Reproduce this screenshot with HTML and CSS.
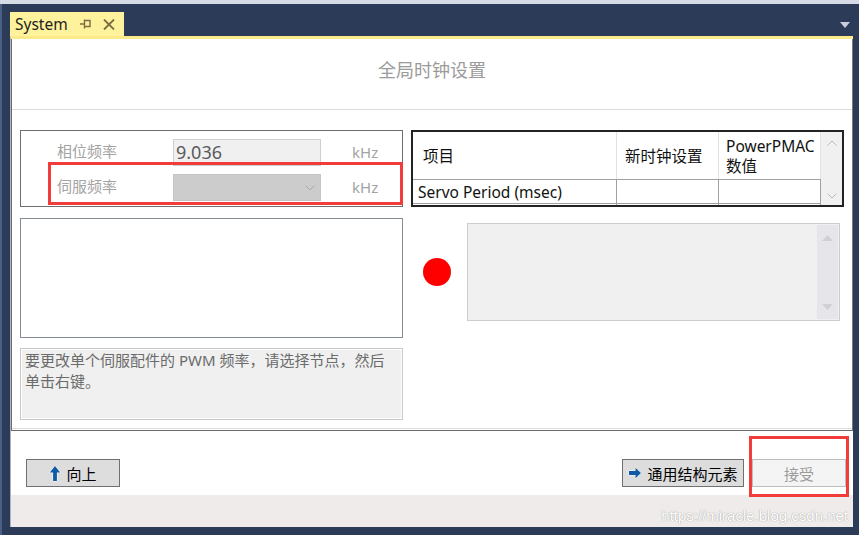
FILE: index.html
```html
<!DOCTYPE html>
<html lang="zh-CN">

<head>
    <meta charset="UTF-8">
    <title>System - 全局时钟设置</title>
    <link rel="stylesheet" href="styles.css">
</head>

<body>
    <div class="app">
        <div class="topline"></div>

        <!-- 标签栏 -->
        <div class="tabstrip">
            <div class="tab">
                <span class="tab-title">System</span>
                <svg class="tab-pin" width="11" height="10" viewBox="0 0 11 10">
                    <path d="M0 5h4.5M4.5 0.5v9M4.5 1.5h5.5v6h-5.5" stroke="#7a6e44" stroke-width="1.4" fill="none" />
                </svg>
                <svg class="tab-close" width="12" height="11" viewBox="0 0 12 11">
                    <path d="M1 0.5l10 10M11 0.5l-10 10" stroke="#776c45" stroke-width="1.8" fill="none" />
                </svg>
            </div>
            <svg class="tab-menu" width="10" height="6" viewBox="0 0 10 6">
                <path d="M0 0h10l-5 6z" fill="#c9cedf" />
            </svg>
        </div>

        <div class="doc">
            <div class="panel">
                <div class="panel-head">全局时钟设置</div>

                <div class="panel-body">
                    <!-- 左侧 -->
                    <div class="col-left">
                        <div class="freq-box">
                            <div class="freq-row">
                                <span class="freq-label">相位频率</span>
                                <div class="field">9.036</div>
                                <span class="unit">kHz</span>
                            </div>
                            <div class="freq-row">
                                <span class="freq-label">伺服频率</span>
                                <div class="field combo">
                                    <svg width="10" height="6" viewBox="0 0 10 6">
                                        <path d="M0.5 0.5l4.5 4.5 4.5-4.5" stroke="#aaa" fill="none" />
                                    </svg>
                                </div>
                                <span class="unit">kHz</span>
                            </div>
                        </div>

                        <div class="node-list"></div>

                        <div class="hint">要更改单个伺服配件的 PWM 频率，请选择节点，然后单击右键。</div>
                    </div>

                    <!-- 右侧 -->
                    <div class="col-right">
                        <div class="grid">
                            <div class="grid-cols">
                                <div class="grid-row head">
                                    <div class="cell c1">项目</div>
                                    <div class="cell c2">新时钟设置</div>
                                    <div class="cell c3">PowerPMAC<br>数值</div>
                                </div>
                                <div class="grid-row">
                                    <div class="cell c1">Servo Period (msec)</div>
                                    <div class="cell c2"></div>
                                    <div class="cell c3"></div>
                                </div>
                                <div class="grid-row">
                                    <div class="cell c1"></div>
                                    <div class="cell c2"></div>
                                    <div class="cell c3"></div>
                                </div>
                            </div>
                            <div class="vscroll">
                                <svg width="10" height="6" viewBox="0 0 10 6">
                                    <path d="M0.5 5.5l4.5-4.5 4.5 4.5" stroke="#bbb" fill="none" />
                                </svg>
                                <svg width="10" height="6" viewBox="0 0 10 6">
                                    <path d="M0.5 0.5l4.5 4.5 4.5-4.5" stroke="#bbb" fill="none" />
                                </svg>
                            </div>
                        </div>

                        <div class="status-row">
                            <div class="led"></div>
                            <div class="log">
                                <div class="log-scroll">
                                    <svg width="11" height="6" viewBox="0 0 11 6">
                                        <path d="M0 6l5.5-6 5.5 6z" fill="#cfcfd4" />
                                    </svg>
                                    <svg width="11" height="6" viewBox="0 0 11 6">
                                        <path d="M0 0l5.5 6 5.5-6z" fill="#cfcfd4" />
                                    </svg>
                                </div>
                            </div>
                        </div>
                    </div>
                </div>
            </div>

            <!-- 底部按钮 -->
            <div class="footer">
                <button class="btn">
                    <svg width="12" height="17" viewBox="0 0 12 17">
                        <path d="M6 1L11.2 7.5H7.9V16H4.1V7.5H0.8Z" fill="#0f5aa6" stroke="#fff" stroke-width="1" paint-order="stroke" />
                    </svg>
                    向上
                </button>
                <div class="footer-right">
                    <button class="btn wide">
                        <svg width="14" height="12" viewBox="0 0 14 12">
                            <path d="M1 4H7.5V0.8L13 6L7.5 11.2V8H1Z" fill="#0f5aa6" stroke="#fff" stroke-width="1" paint-order="stroke" />
                        </svg>
                        通用结构元素
                    </button>
                    <button class="btn disabled">接受</button>
                </div>
            </div>

            <div class="strip">
                <span class="watermark">https://miracle.blog.csdn.net</span>
            </div>
        </div>

        <!-- 红色标注框 -->
        <div class="mark mark-freq"></div>
        <div class="mark mark-accept"></div>
    </div>
</body>

</html>
```

FILE: styles.css
```css
body {
    margin: 0;
    font-family: "Noto Sans", "Noto Sans CJK SC", sans-serif;
}

.app {
    position: relative;
    width: 859px;
    height: 535px;
    overflow: hidden;
    background: #2c3b58;
    box-shadow: inset 2px 0 0 #4a5f88;
}

.topline {
    height: 4px;
    background: #d7dbe8;
}

/* 标签栏 */
.tabstrip {
    height: 32px;
    display: flex;
    align-items: flex-end;
    padding-left: 10px;
}

.tab {
    width: 114px;
    height: 24px;
    box-sizing: border-box;
    background: #fff29d;
    display: flex;
    align-items: center;
    padding-left: 5px;
}

.tab-title {
    font-size: 15.5px;
    color: #1e1e1e;
    line-height: 20px;
}

.tab-pin {
    margin-left: 12px;
}

.tab-close {
    margin-left: 12px;
}

.tab-menu {
    margin-left: auto;
    margin-right: 9px;
    margin-bottom: 8px;
}

/* 文档区域 */
.doc {
    margin-left: 10px;
    width: 843px;
    height: 491px;
    box-sizing: border-box;
    border-top: 3px solid #fbe98a;
    border-left: 1px solid #a9b4cc;
    background: #fff;
    display: flex;
    flex-direction: column;
}

.panel {
    border-left: 1px solid #6b6b6b;
    border-right: 1px solid #7a7a7a;
    border-bottom: 1px solid #6b6b6b;
    padding-bottom: 1px;
}

.panel-head {
    height: 71px;
    box-sizing: border-box;
    padding-top: 18px;
    border-bottom: 1px solid #dcdcdc;
    text-align: center;
    font-size: 18px;
    line-height: 24px;
    color: #9b9b9b;
    font-family: "Noto Sans CJK SC", sans-serif;
}

.panel-body {
    display: flex;
    gap: 8px;
    padding: 20px 6px 8px 8px;
    border-bottom: 1px solid #dcdcdc;
}

.col-left {
    width: 383px;
    display: flex;
    flex-direction: column;
}

.col-right {
    width: 433px;
}

/* 频率设置 */
.freq-box {
    height: 77px;
    box-sizing: border-box;
    border: 1px solid #6e6e6e;
    padding: 8px 0 0 36px;
    display: flex;
    flex-direction: column;
    gap: 8px;
}

.freq-row {
    display: flex;
    align-items: center;
    height: 27px;
}

.freq-label {
    width: 116px;
    font-size: 15px;
    line-height: 20px;
    margin-top: -3px;
    color: #a3a3a3;
    font-family: "Noto Sans CJK SC", sans-serif;
}

.field {
    width: 148px;
    height: 27px;
    box-sizing: border-box;
    background: #f0f0f0;
    border: 1px solid #cfcfcf;
    padding-left: 2px;
    font-size: 18px;
    line-height: 25px;
    color: #5a5a5a;
}

.field.combo {
    background: #cccccc;
    border-color: #c4c4c4;
    display: flex;
    align-items: center;
    justify-content: flex-end;
    padding-right: 5px;
}

.unit {
    margin-left: 31px;
    margin-top: -2px;
    font-size: 15px;
    color: #a3a3a3;
}

.node-list {
    margin-top: 11px;
    height: 120px;
    box-sizing: border-box;
    border: 1px solid #858c93;
}

.hint {
    margin-top: 10px;
    height: 72px;
    box-sizing: border-box;
    border: 1px solid #c9c9c9;
    box-shadow: inset 0 0 0 1px #fff;
    background: #f0f0f0;
    padding: 1px 14px 0 4px;
    font-size: 15px;
    line-height: 21px;
    color: #6b6b6b;
}

/* 表格 */
.grid {
    height: 77px;
    box-sizing: border-box;
    border: 2px solid #222;
    display: flex;
}

.grid-cols {
    width: 408px;
    overflow: hidden;
}

.grid-row {
    display: flex;
    height: 23px;
    border-bottom: 1px solid #a0a0a0;
}

.grid-row.head {
    height: 47px;
}

.cell {
    box-sizing: border-box;
    border-right: 1px solid #a0a0a0;
    display: flex;
    align-items: center;
    font-size: 15.5px;
    line-height: 20px;
    color: #111;
    white-space: nowrap;
}

.head .cell {
    border-right-color: #e2e2e2;
}

.c1 {
    width: 204px;
    padding-left: 5px;
}

.head .c1 {
    padding-left: 10px;
}

.c2 {
    width: 102px;
    padding-left: 8px;
}

.c3 {
    width: 102px;
    padding-left: 7px;
}

.vscroll {
    flex: 1;
    background: #f0f0f0;
    display: flex;
    flex-direction: column;
    align-items: center;
    justify-content: space-between;
    padding: 8px 0 6px;
}

/* 状态 */
.status-row {
    display: flex;
    align-items: center;
    margin-top: 16px;
    padding-left: 12px;
}

.led {
    width: 28px;
    height: 28px;
    border-radius: 50%;
    background: #ff0000;
}

.log {
    margin-left: 16px;
    width: 373px;
    height: 98px;
    box-sizing: border-box;
    border: 1px solid #cccccc;
    background: #f0f0f0;
    padding: 1px;
    display: flex;
    justify-content: flex-end;
}

.log-scroll {
    width: 21px;
    background: #e5e5ea;
    display: flex;
    flex-direction: column;
    align-items: center;
    justify-content: space-between;
    padding: 10px 0 9px;
}

/* 底部按钮 */
.footer {
    height: 64px;
    box-sizing: border-box;
    padding: 28px 7px 0 15px;
    display: flex;
    justify-content: space-between;
    align-items: flex-start;
}

.footer-right {
    display: flex;
    gap: 8px;
}

.btn {
    width: 94px;
    height: 28px;
    box-sizing: border-box;
    border: 1px solid #707070;
    background: #dddddd;
    display: flex;
    align-items: center;
    justify-content: center;
    gap: 5px;
    padding: 0;
    font-family: "Noto Sans CJK SC", sans-serif;
    font-size: 15px;
    color: #000;
}

.btn.wide {
    width: 122px;
}

.btn.disabled {
    background: #f4f4f4;
    border-color: #bdbdbd;
    color: #9a9a9a;
}

.strip {
    flex: 1;
    background: #efebea;
    display: flex;
    justify-content: flex-end;
    align-items: flex-end;
    padding: 0 5px 3px 0;
}

.watermark {
    font-family: "Liberation Sans", sans-serif;
    font-size: 15px;
    color: #fff;
    text-shadow: 0 0 1px #999, 0 0 1px #bbb;
}

/* 红色标注 */
.mark {
    position: absolute;
    box-sizing: border-box;
    border: 3px solid #f23b3b;
}

.mark-freq {
    left: 48px;
    top: 162px;
    width: 355px;
    height: 43px;
}

.mark-accept {
    left: 749px;
    top: 436px;
    width: 100px;
    height: 61px;
}
```
